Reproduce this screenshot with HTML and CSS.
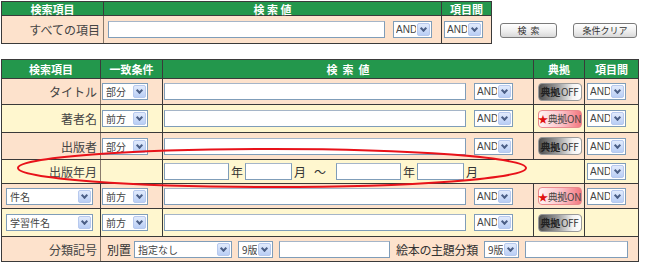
FILE: index.html
```html
<!DOCTYPE html>
<html lang="ja">
<head>
  <meta charset="UTF-8">
  <title>検索</title>
  <link rel="stylesheet" href="styles.css">
</head>
<body>
  <div class="page">
    <div class="top">
      <table class="grid simple">
        <colgroup><col class="c-a"><col class="c-b"><col class="c-c"></colgroup>
        <tr class="h-head">
          <th>検索項目</th><th>検&nbsp;索&nbsp;値</th><th>項目間</th>
        </tr>
        <tr class="pe h-top">
          <td class="lbl">すべての項目</td>
          <td class="ctl">
            <input class="txt w-all" type="text">
            <span class="sel w-and"><select><option>AND</option></select><i class="arr"></i></span>
          </td>
          <td class="ctl pad">
            <span class="sel w-and"><select><option>AND</option></select><i class="arr"></i></span>
          </td>
        </tr>
      </table>
      <div class="btns">
        <button class="btn">検&nbsp;&nbsp;索</button>
        <button class="btn">条件クリア</button>
      </div>
    </div>

    <table class="grid detail">
      <colgroup><col class="d-a"><col class="d-b"><col class="d-c"><col class="d-d"><col class="d-e"></colgroup>
      <tr class="h-head2">
        <th>検索項目</th><th>一致条件</th><th>検&nbsp;&nbsp;索&nbsp;&nbsp;値</th><th>典拠</th><th>項目間</th>
      </tr>
      <tr class="pe h-26">
        <td class="lbl">タイトル</td>
        <td class="ctl"><span class="sel w-mt"><select><option>部分</option></select><i class="arr"></i></span></td>
        <td class="ctl"><input class="txt w-val" type="text"><span class="sel w-and"><select><option>AND</option></select><i class="arr"></i></span></td>
        <td class="ctl mid"><span class="ten off">典拠<em>OFF</em></span></td>
        <td class="ctl pad"><span class="sel w-and"><select><option>AND</option></select><i class="arr"></i></span></td>
      </tr>
      <tr class="ye h-28">
        <td class="lbl">著者名</td>
        <td class="ctl"><span class="sel w-mt"><select><option>前方</option></select><i class="arr"></i></span></td>
        <td class="ctl"><input class="txt w-val" type="text"><span class="sel w-and"><select><option>AND</option></select><i class="arr"></i></span></td>
        <td class="ctl mid"><span class="ten on"><b>★</b>典拠ON</span></td>
        <td class="ctl pad"><span class="sel w-and"><select><option>AND</option></select><i class="arr"></i></span></td>
      </tr>
      <tr class="pe h-27">
        <td class="lbl">出版者</td>
        <td class="ctl"><span class="sel w-mt"><select><option>部分</option></select><i class="arr"></i></span></td>
        <td class="ctl"><input class="txt w-val" type="text"><span class="sel w-and"><select><option>AND</option></select><i class="arr"></i></span></td>
        <td class="ctl mid"><span class="ten off">典拠<em>OFF</em></span></td>
        <td class="ctl pad"><span class="sel w-and"><select><option>AND</option></select><i class="arr"></i></span></td>
      </tr>
      <tr class="ye h-24">
        <td class="lbl">出版年月</td>
        <td></td>
        <td class="ctl date" colspan="2">
          <input class="txt w-y" type="text"><span class="u">年</span><input class="txt w-m" type="text"><span class="u">月</span><span class="tilde">～</span><input class="txt w-y" type="text"><span class="u">年</span><input class="txt w-m" type="text"><span class="u">月</span>
        </td>
        <td class="ctl pad"><span class="sel w-and"><select><option>AND</option></select><i class="arr"></i></span></td>
      </tr>
      <tr class="pe h-25">
        <td class="ctl lpad"><span class="sel w-item"><select><option>件名</option></select><i class="arr"></i></span></td>
        <td class="ctl"><span class="sel w-mt"><select><option>前方</option></select><i class="arr"></i></span></td>
        <td class="ctl"><input class="txt w-val" type="text"><span class="sel w-and"><select><option>AND</option></select><i class="arr"></i></span></td>
        <td class="ctl mid"><span class="ten on"><b>★</b>典拠ON</span></td>
        <td class="ctl pad"><span class="sel w-and"><select><option>AND</option></select><i class="arr"></i></span></td>
      </tr>
      <tr class="ye h-28">
        <td class="ctl lpad"><span class="sel w-item"><select><option>学習件名</option></select><i class="arr"></i></span></td>
        <td class="ctl"><span class="sel w-mt"><select><option>前方</option></select><i class="arr"></i></span></td>
        <td class="ctl"><input class="txt w-val" type="text"><span class="sel w-and"><select><option>AND</option></select><i class="arr"></i></span></td>
        <td class="ctl mid"><span class="ten off">典拠<em>OFF</em></span></td>
        <td></td>
      </tr>
      <tr class="pe h-25">
        <td class="lbl">分類記号</td>
        <td class="ctl cls" colspan="4">
          <span class="t">別置</span>
          <span class="sel w-bet"><select><option>指定なし</option></select><i class="arr"></i></span>
          <span class="sel w-ed"><select><option>9版</option></select><i class="arr"></i></span>
          <input class="txt w-cls" type="text">
          <span class="t t2">絵本の主題分類</span>
          <span class="sel w-ed"><select><option>9版</option></select><i class="arr"></i></span>
          <input class="txt w-pic" type="text">
        </td>
      </tr>
    </table>

    <svg class="mark" width="650" height="267" viewBox="0 0 650 267">
      <ellipse cx="272" cy="168" rx="254" ry="19" fill="none" stroke="#e8121a" stroke-width="2"/>
    </svg>
  </div>
</body>
</html>
```

FILE: styles.css
```css
body {
  margin: 0;
  background: #fff;
  color: #333;
  font-family: "Noto Sans CJK JP", sans-serif;
}
.page {
  position: relative;
  width: 649px;
  padding: 1px 0 0 1px;
}
.top {
  display: flex;
  align-items: flex-start;
}
table {
  border-collapse: collapse;
  table-layout: fixed;
}
.grid td, .grid th {
  border: 1px solid #3a3a3a;
  padding: 0;
}
.grid td.lbl {
  border-right-color: #8a7b6c;
}
.grid th {
  background: #23974c;
  color: #fff;
  font-size: 11px;
  font-weight: bold;
  line-height: 12px;
  white-space: nowrap;
}
.simple { width: 490px; }
.c-a { width: 102px; }
.c-b { width: 338px; }
.c-c { width: 50px; }
.detail {
  width: 637px;
  margin-top: 15px;
}
.d-a { width: 99px; }
.d-b { width: 62px; }
.d-c { width: 371px; }
.d-d { width: 51px; }
.d-e { width: 54px; }

.h-head { height: 14px; }
.h-head2 { height: 19px; }
.h-top { height: 28px; }
.h-24 { height: 24px; }
.h-25 { height: 25px; }
.h-26 { height: 26px; }
.h-27 { height: 27px; }
.h-28 { height: 28px; }

.pe { background: #fde2cc; }
.ye { background: #fff7cf; }

.lbl {
  text-align: right;
  padding-right: 3px !important;
  font-size: 12px;
  color: #444;
  white-space: nowrap;
}
.ctl {
  white-space: nowrap;
  padding-left: 1px !important;
  font-size: 0;
}
.ctl.pad { padding-left: 2px !important; }
.ctl.lpad { padding-left: 4px !important; }
.ctl.mid { text-align: center; }

input.txt {
  box-sizing: border-box;
  height: 17px;
  border: 1px solid #7f9db9;
  border-top-color: #a5b5c8;
  background: #fff;
  margin: 0;
  padding: 0 2px;
  vertical-align: middle;
}
.w-all { width: 277px; margin-left: 3px !important; }
.w-val { width: 302px; }
.w-y { width: 65px; }
.w-m { width: 47px; }
.w-cls { width: 111px; margin-left: 6px !important; }
.w-pic { width: 103px; margin-left: 6px !important; }

.sel {
  box-sizing: border-box;
  display: inline-flex;
  align-items: stretch;
  height: 17px;
  border: 1px solid #7f9db9;
  background: #fff;
  vertical-align: middle;
}
.sel select {
  appearance: none;
  -webkit-appearance: none;
  flex: 1;
  min-width: 0;
  border: 0;
  background: transparent;
  padding: 0 0 0 3px;
  margin: 0;
  font-family: "Noto Sans CJK JP", sans-serif;
  font-size: 10px;
  color: #444;
  outline: none;
}
.sel .arr {
  position: relative;
  flex: none;
  width: 11px;
  margin: 1px;
  border: 1px solid #b7c9ee;
  border-radius: 2px;
  background: linear-gradient(#e2ebfc, #b9cef5);
}
.sel .arr::before {
  content: "";
  position: absolute;
  left: 3px;
  top: 2px;
  width: 3px;
  height: 3px;
  border-right: 2px solid #4b5f86;
  border-bottom: 2px solid #4b5f86;
  transform: rotate(45deg);
}
.w-and { width: 39px; margin-left: 3px; }
.w-and select {
  font-family: "Liberation Sans", sans-serif;
  font-size: 10px;
  padding: 0 0 0 2px;
  text-overflow: clip;
}
.ctl .w-and:first-child { margin-left: 0; }
.ctl input + .w-and { margin-left: 8px; }
.w-mt { width: 46px; }
.w-item { width: 87px; }
.w-bet { width: 98px; margin-left: 3px; }
.w-ed { width: 35px; margin-left: 6px; }

.ten {
  box-sizing: border-box;
  display: inline-flex;
  align-items: center;
  justify-content: center;
  width: 44px;
  height: 18px;
  border: 1px solid #9a9a9a;
  border-radius: 4px;
  font-size: 10px;
  letter-spacing: -0.3px;
  vertical-align: middle;
}
.ten.off {
  background: linear-gradient(to right, #4e4e4e, #9d9d9d 45%, #f2f2f2 80%, #fff);
  color: #222;
  font-weight: bold;
}
.ten.off em {
  font-style: normal;
  font-weight: normal;
  color: #333;
  margin-left: 1px;
}
.ten.on {
  background: linear-gradient(to right, #fff4f4, #fbc0c6 55%, #f3777f);
  border-color: #e98a8f;
  color: #444;
}
.ten.on b {
  color: #e01010;
  font-weight: normal;
  font-size: 10px;
}

.date .u, .date .tilde {
  font-size: 12px;
  color: #333;
  vertical-align: middle;
  margin: 0 2px;
}
.date .tilde { margin: 0 10px 0 6px; }

.cls .t {
  font-size: 12px;
  color: #333;
  vertical-align: middle;
  margin-left: 5px;
}
.cls .t2 { margin-left: 6px; letter-spacing: -0.3px; }

.btns {
  display: flex;
  gap: 16px;
  margin: 22px 0 0 8px;
}
.btn {
  width: 57px;
  height: 15px;
  padding: 0;
  border: 1px solid #7a7a7a;
  border-radius: 3px;
  background: linear-gradient(#ffffff, #ececec 60%, #d8d8d8);
  font-family: "Noto Sans CJK JP", sans-serif;
  font-size: 9px;
  line-height: 13px;
  color: #333;
}
.btn + .btn { width: 64px; }

.mark {
  position: absolute;
  left: 0;
  top: 0;
  pointer-events: none;
}
```
